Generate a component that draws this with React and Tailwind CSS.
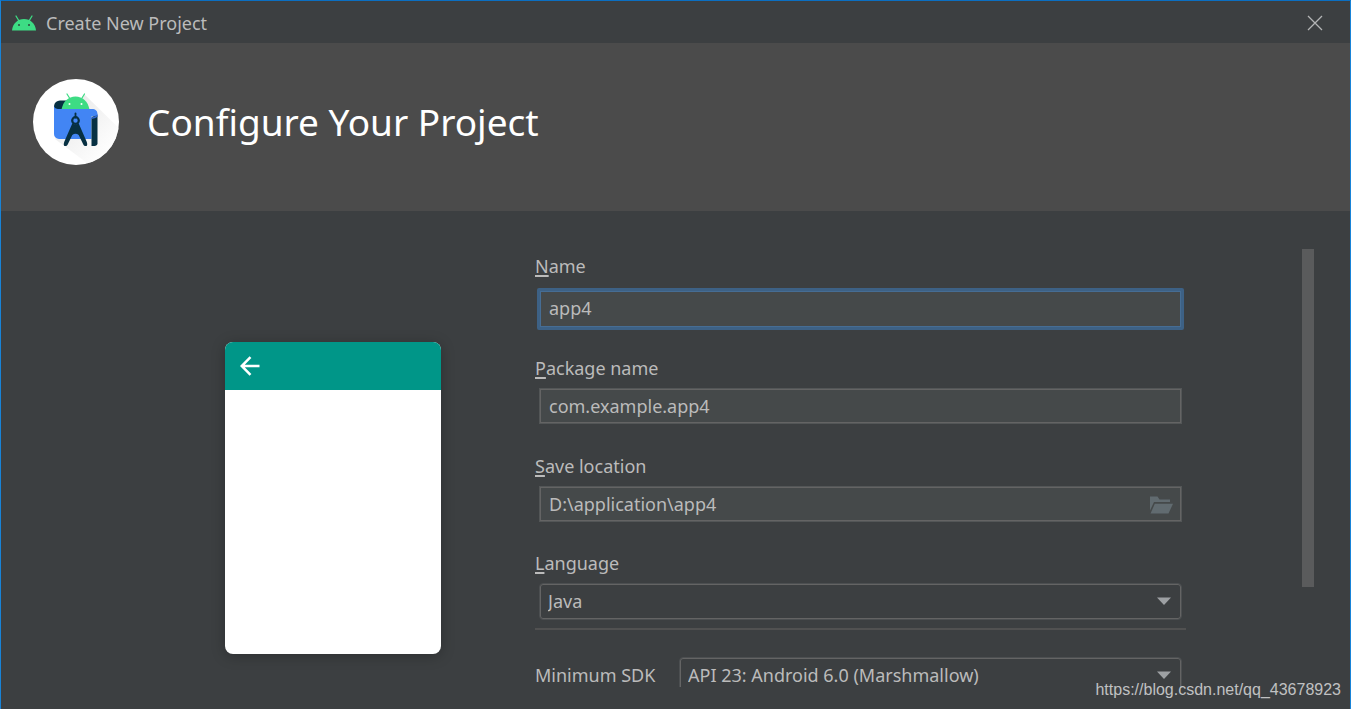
import React, { useState } from 'react';

const AndroidHead = () => (
    <svg className="w-6 h-4" viewBox="0 0 24 16" aria-hidden="true">
        <path d="M4 1l3 5M20 1l-3 5" stroke="#3ddc84" strokeWidth="1.3" strokeLinecap="round" />
        <path d="M0 15.500C.6 8.500 5.6 4 12 4S23.400 8.500 24 15.500z" fill="#3ddc84" />
        <circle cx="7" cy="10" r="1" fill="#2c4a3c" />
        <circle cx="17" cy="10" r="1" fill="#2c4a3c" />
    </svg>
);

const StudioLogo = () => (
    <svg className="w-[86px] h-[86px]" viewBox="0 0 86 86" aria-hidden="true">
        <defs>
            <linearGradient id="logoShade" x1="0" y1="0" x2="1" y2="1">
                <stop offset="0.200" stopColor="#e2e2e2" />
                <stop offset="0.800" stopColor="#ffffff" />
            </linearGradient>
            <clipPath id="logoClip">
                <circle cx="43" cy="43" r="43" />
            </clipPath>
        </defs>
        <circle cx="43" cy="43" r="43" fill="#fff" />
        <path d="M51 15L92 55L62 90L22 60z" fill="url(#logoShade)" opacity="0.700" clipPath="url(#logoClip)" />
        {/* rolled sheet behind the head */}
        <path d="M36 21.500H27a6 6 0 0 0-6 5.500v8h16z" fill="#073042" />
        <path d="M34 15l2.500 4M51.500 15L49 19" stroke="#3ddc84" strokeWidth="1.200" strokeLinecap="round" />
        <path d="M28.500 30.500C30 22.500 35.500 17.500 42.500 17.500S55 22.500 56.500 30.500z" fill="#3ddc84" />
        <circle cx="36.500" cy="25" r="1" fill="#fff" />
        <circle cx="48.500" cy="25" r="1" fill="#fff" />
        {/* blueprint */}
        <path d="M21 26c0 3 2 4 5 4h33c3.500 0 5.500 2 5.500 5v2.500h-6V60H26a5 5 0 0 1-5-5z" fill="#4285f4" />
        <path d="M58.500 39c0-1.200 2-2 6-2.500v28c0 1.500-1.500 2.500-3 2.500h-3z" fill="#073042" />
        <path d="M58.500 38.500c2.500-.5 5-1.500 6-3.500v2c-.5 1.800-3 2.500-6 3z" fill="#3268cc" />
        {/* compass */}
        <path d="M42.500 34.500v4" stroke="#073042" strokeWidth="1.800" strokeLinecap="round" />
        <circle cx="42.500" cy="41.500" r="3.300" fill="none" stroke="#073042" strokeWidth="2.200" />
        <path
            d="M39.500 44L31.200 63c-.8 2.500-.5 3.800.5 4c1.300.3 2.300-.3 3-1.500L39.300 56Q42.500 53.500 45.700 56L50.300 65.500c.7 1.200 1.700 1.800 3 1.500c1-.2 1.300-1.500.5-4L45.500 44Q42.500 47 39.500 44z"
            fill="#073042"
        />
    </svg>
);

const FolderIcon = () => (
    <svg className="w-6 h-[18px]" viewBox="0 0 24 18" fill="#616b70" aria-hidden="true">
        <path d="M1 0.500H8.500L10.500 3.500H21V6H5L1 14.500z" />
        <path d="M5.800 7.800H24L19.500 17.500H1.500z" />
    </svg>
);

const Arrow = () => (
    <svg
        className="absolute right-[11px] top-[14px] w-[14px] h-2 pointer-events-none"
        viewBox="0 0 14 8"
        fill="#9da0a3"
        aria-hidden="true"
    >
        <path d="M0 0.500H14L7 8z" />
    </svg>
);

const inputClass =
    'block w-full h-9 px-[9px] bg-[#45494a] border border-[#535657] shadow-[inset_0_0_0_1px_#646464] outline-none';
const selectClass =
    'block w-full h-[37px] px-2 appearance-none rounded bg-[#3c3f41] border border-[#4c4f51] shadow-[inset_0_0_0_1px_#646464] outline-none';

const Label = ({ id, text }) => (
    <label htmlFor={id} className="block h-7 leading-7">
        <span className="underline decoration-2 underline-offset-2">{text[0]}</span>
        {text.slice(1)}
    </label>
);

const App = () => {
    const [name, setName] = useState('app4');
    const [packageName, setPackageName] = useState('com.example.app4');
    const [location, setLocation] = useState('D:\\application\\app4');

    return (
        <div className="relative h-screen flex flex-col overflow-hidden bg-[#3c3f41] border-t border-x border-t-[#0b6fc2] border-x-[#1883d7] text-[#bbbbbb] text-[18px] font-['Noto_Sans','Open_Sans',sans-serif]">
            {/* Title bar */}
            <div className="h-[42px] shrink-0 flex items-center pt-0.5 pl-[11px] pr-[27px] bg-[#3c3f41]">
                <AndroidHead />
                <span className="ml-[10px]">Create New Project</span>
                <button className="ml-auto" aria-label="Close">
                    <svg className="w-4 h-4" viewBox="0 0 16 16" stroke="#b4b5b6" strokeWidth="1.300" aria-hidden="true">
                        <path d="M1 1L15 15M15 1L1 15" />
                    </svg>
                </button>
            </div>

            {/* Header */}
            <header className="h-[168px] shrink-0 flex items-center gap-7 pl-8 pb-[10px] bg-[#4b4b4b]">
                <StudioLogo />
                <h1 className="text-[37px] text-white">Configure Your Project</h1>
            </header>

            <main className="flex-1 min-h-0 flex pt-[38px] pb-[22px] pl-[224px] pr-9">
                {/* Activity preview */}
                <div className="w-[216px] h-[312px] shrink-0 mt-[93px] rounded-lg overflow-hidden bg-white shadow-[0_2px_14px_rgba(0,0,0,0.25)]">
                    <div className="h-12 flex items-center pl-[15px] bg-[#009688]">
                        <svg className="w-5 h-5" viewBox="0 0 20 20" fill="none" stroke="#fff" strokeWidth="2.500" aria-hidden="true">
                            <path d="M19.500 10H2M10.500 1.200L1.700 10L10.500 18.800" />
                        </svg>
                    </div>
                </div>

                <form className="flex-1 min-w-0 ml-[94px] pt-[3px] overflow-hidden" onSubmit={(e) => e.preventDefault()}>
                    <Label id="name" text="Name" />
                    <div className="mt-2 mx-0.5">
                        <input
                            id="name"
                            value={name}
                            onChange={(e) => setName(e.target.value)}
                            className="block w-full h-[42px] px-[9px] pb-0.5 bg-[#45494a] border-3 border-[#3d6185] rounded-xs shadow-[inset_0_0_0_1px_#466d94] outline-none"
                        />
                    </div>

                    <div className="mt-6">
                        <Label id="package" text="Package name" />
                        <div className="mt-1.5 mx-1">
                            <input
                                id="package"
                                value={packageName}
                                onChange={(e) => setPackageName(e.target.value)}
                                className={inputClass}
                            />
                        </div>
                    </div>

                    <div className="mt-7">
                        <Label id="location" text="Save location" />
                        <div className="relative mt-1.5 mx-1">
                            <input
                                id="location"
                                value={location}
                                onChange={(e) => setLocation(e.target.value)}
                                className={inputClass}
                            />
                            <button className="absolute right-[9px] top-[10px]" type="button" aria-label="Browse">
                                <FolderIcon />
                            </button>
                        </div>
                    </div>

                    <div className="mt-[27px]">
                        <Label id="language" text="Language" />
                        <div className="relative mt-1.5 mx-1">
                            <select id="language" className={selectClass}>
                                <option>Java</option>
                                <option>Kotlin</option>
                            </select>
                            <Arrow />
                        </div>
                    </div>

                    <hr className="mt-2 border-t-2 border-[#515151]" />

                    <div className="mt-[27px] mr-1 flex items-center">
                        <label htmlFor="sdk" className="w-36 shrink-0">
                            Minimum SDK
                        </label>
                        <div className="relative flex-1">
                            <select id="sdk" className={selectClass}>
                                <option>API 23: Android 6.0 (Marshmallow)</option>
                            </select>
                            <Arrow />
                        </div>
                    </div>
                </form>

                {/* Scrollbar thumb */}
                <div className="w-3 h-[338px] shrink-0 ml-[116px] bg-[#5a5b5c]" />
            </main>

            <span className="absolute right-[9px] bottom-[7px] text-[16px] text-[#c0c1c2] font-['Liberation_Sans',sans-serif]">
                https://blog.csdn.net/qq_43678923
            </span>
        </div>
    );
};

export default App;
